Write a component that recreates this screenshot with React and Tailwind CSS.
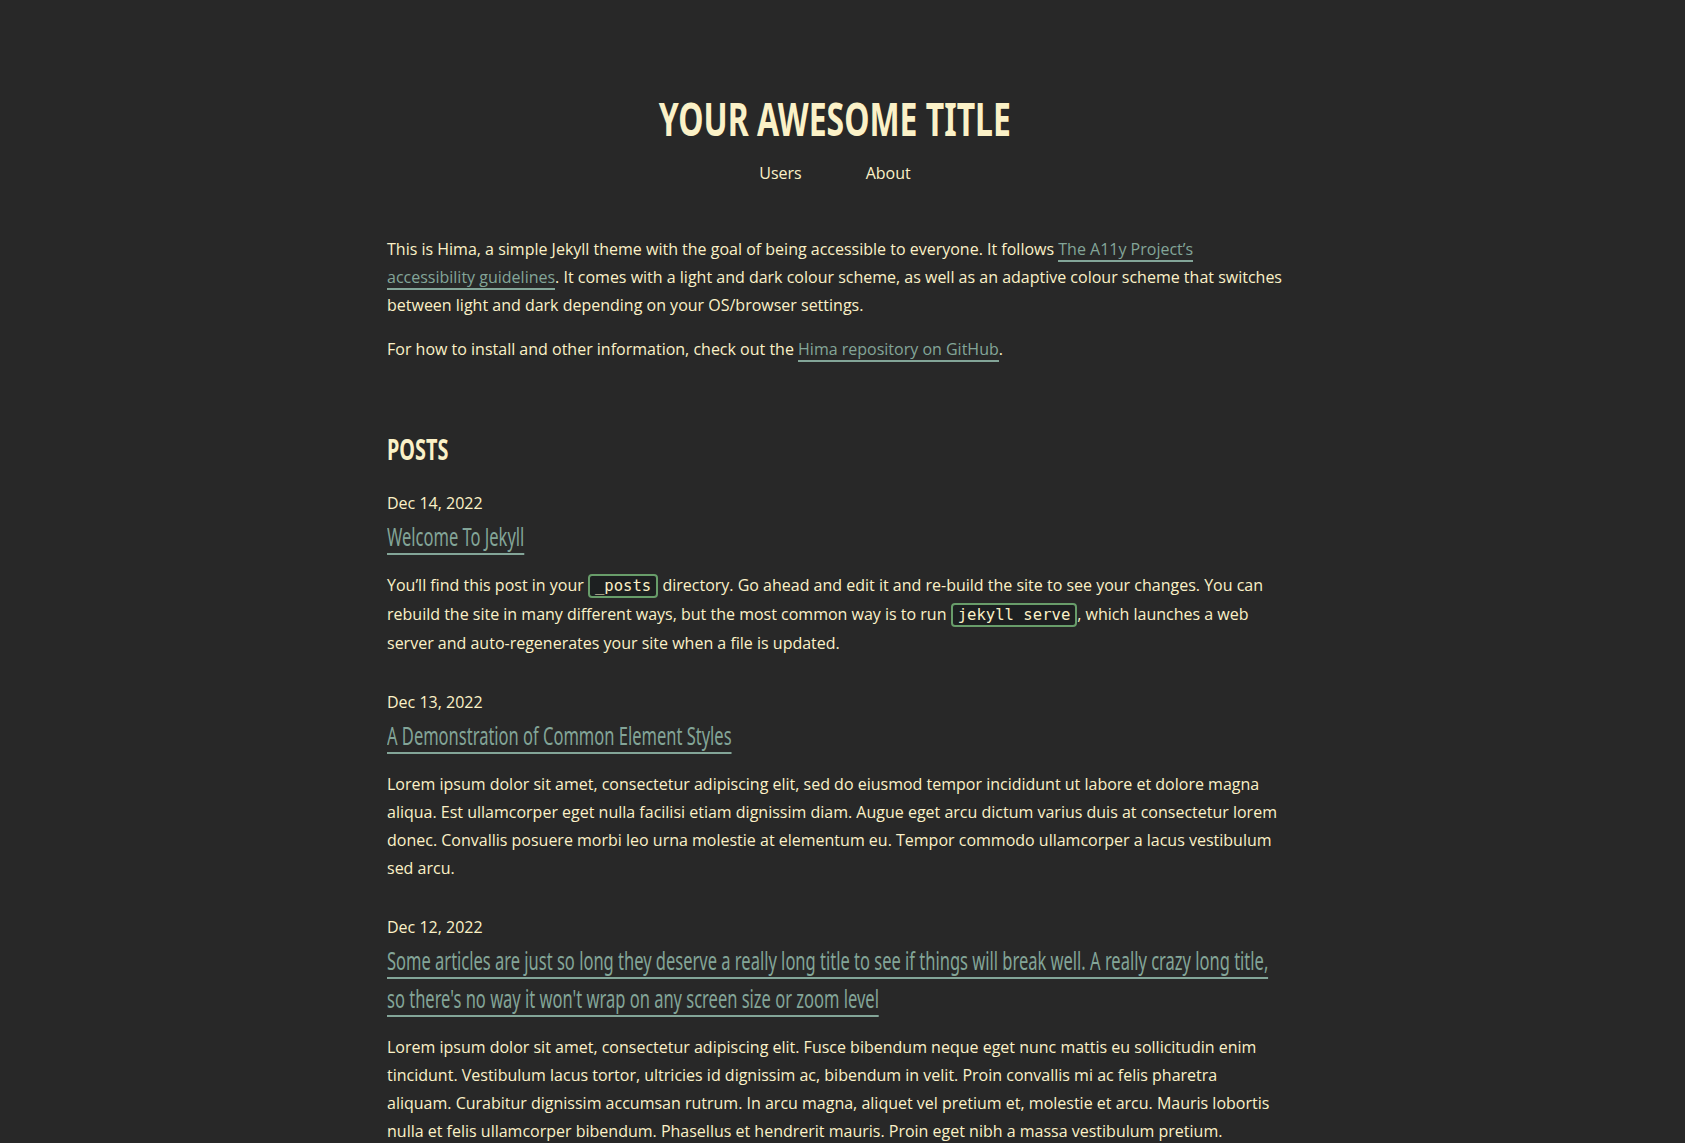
export default function App() {
  const linkCls = "text-[#83a598] border-b-2 border-[#83a598]";
  const codeCls =
    "font-['DejaVu_Sans_Mono',monospace] text-[15.6px] bg-[#1d2021] border-2 border-[#689d6a] rounded-[4px] px-[5px] py-[1px]";
  const titleFont = "font-['Noto_Sans',sans-serif]";
  const h3Cls = `${titleFont} text-[25px] leading-[38px] w-[1380px] scale-x-[0.66] origin-left`;
  return (
    <div className="min-h-screen overflow-x-hidden bg-[#282828] text-[#fbf1c7] font-['Open_Sans',sans-serif] text-base pr-[15px]">
      <header className="pt-[90px] flex flex-col items-center">
        <h1 className={`${titleFont} font-bold text-[47px] leading-[56px] uppercase scale-x-[0.68]`}>
          Your Awesome Title
        </h1>
        <nav className="mt-[13px] flex gap-16 leading-7">
          <a href="#">Users</a>
          <a href="#">About</a>
        </nav>
      </header>
      <main className="w-[896px] mx-auto mt-[48px] leading-7">
        <div className="flex flex-col gap-4">
          <p>
            This is Hima, a simple Jekyll theme with the goal of being accessible to everyone. It follows{" "}
            <a href="#" className={linkCls}>The A11y Project’s accessibility guidelines</a>. It comes with a light and dark
            colour scheme, as well as an adaptive colour scheme that switches between light and dark depending on your
            OS/browser settings.
          </p>
          <p>
            For how to install and other information, check out the{" "}
            <a href="#" className={linkCls}>Hima repository on GitHub</a>.
          </p>
        </div>
        <h2 className={`${titleFont} mt-[68px] font-bold text-[29px] leading-[35px] uppercase scale-x-[0.685] origin-left`}>
          Posts
        </h2>
        <ul className="mt-6 flex flex-col gap-8">
          <li>
            <div className="leading-[27px]">Dec 14, 2022</div>
            <h3 className={h3Cls}>
              <a href="#" className={linkCls}>Welcome To Jekyll</a>
            </h3>
            <p className="mt-4">
              You’ll find this post in your <code className={codeCls}>_posts</code> directory. Go ahead and edit it and
              re-build the site to see your changes. You can rebuild the site in many different ways, but the most common
              way is to run <code className={codeCls}>jekyll serve</code>, which launches a web server and auto-regenerates
              your site when a file is updated.
            </p>
          </li>
          <li>
            <div className="leading-[27px]">Dec 13, 2022</div>
            <h3 className={h3Cls}>
              <a href="#" className={linkCls}>A Demonstration of Common Element Styles</a>
            </h3>
            <p className="mt-4">
              Lorem ipsum dolor sit amet, consectetur adipiscing elit, sed do eiusmod tempor incididunt ut labore et dolore
              magna aliqua. Est ullamcorper eget nulla facilisi etiam dignissim diam. Augue eget arcu dictum varius duis at
              consectetur lorem donec. Convallis posuere morbi leo urna molestie at elementum eu. Tempor commodo ullamcorper
              a lacus vestibulum sed arcu.
            </p>
          </li>
          <li>
            <div className="leading-[27px]">Dec 12, 2022</div>
            <h3 className={h3Cls}>
              <a href="#" className={linkCls}>
                Some articles are just so long they deserve a really long title to see if things will break well. A really
                crazy long title,
                <br />
                so there's no way it won't wrap on any screen size or zoom level
              </a>
            </h3>
            <p className="mt-4">
              Lorem ipsum dolor sit amet, consectetur adipiscing elit. Fusce bibendum neque eget nunc mattis eu sollicitudin
              enim tincidunt. Vestibulum lacus tortor, ultricies id dignissim ac, bibendum in velit. Proin convallis mi ac
              felis pharetra aliquam. Curabitur dignissim accumsan rutrum. In arcu magna, aliquet vel pretium et, molestie
              et arcu. Mauris lobortis nulla et felis ullamcorper bibendum. Phasellus et hendrerit mauris. Proin eget nibh a
              massa vestibulum pretium. Suspendisse eu nisl a ante aliquet bibendum quis a nunc.
            </p>
          </li>
        </ul>
      </main>
    </div>
  );
}
